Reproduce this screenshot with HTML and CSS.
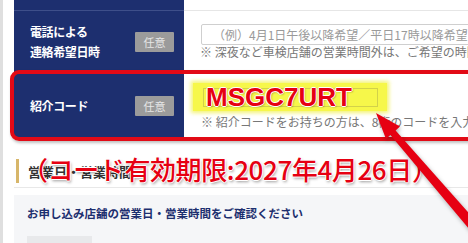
FILE: index.html
```html
<!DOCTYPE html>
<html lang="ja">
<head>
    <meta charset="UTF-8">
    <meta name="viewport" content="width=device-width, initial-scale=1.0">
    <title>紹介コード</title>
    <link rel="stylesheet" href="styles.css">
</head>
<body>
    <div class="page">
        <div class="form">
            <div class="row row-top">
                <div class="label"></div>
                <div class="field"></div>
            </div>
            <div class="row">
                <div class="label">
                    <span class="label-text">電話による<br>連絡希望日時</span>
                    <span class="badge">任意</span>
                </div>
                <div class="field">
                    <div class="input">（例）4月1日午後以降希望／平日17時以降希望</div>
                    <p class="note">※ 深夜など車検店舗の営業時間外は、ご希望の時間帯にご連絡できない場合がございます。</p>
                </div>
            </div>
            <div class="row row-code">
                <div class="label">
                    <span class="label-text">紹介コード</span>
                    <span class="badge">任意</span>
                </div>
                <div class="field">
                    <div class="highlight">
                        <div class="input input-code"></div>
                        <span class="code">MSGC7URT</span>
                    </div>
                    <p class="note note-code">※ 紹介コードをお持ちの方は、8桁のコードを入力してください。</p>
                </div>
            </div>
        </div>

        <section class="hours">
            <h2 class="sec-title">
                営業日・営業時間
                <span class="limit">（コード有効期限:2027年4月26日）</span>
            </h2>
            <div class="hours-box">
                <p class="hours-text">お申し込み店舗の営業日・営業時間をご確認ください</p>
                <div class="hours-tab"></div>
            </div>
        </section>

        <svg class="arrow" width="468" height="243" viewBox="0 0 468 243">
            <polygon points="373,113 397,126.5 392.6,130.4 488,238 480,245.5 387.4,135 383,139" fill="#e60012"/>
        </svg>
    </div>
</body>
</html>
```

FILE: styles.css
```css
body{
    margin: 0;
    padding: 0;
    background-color: #fff;
    overflow: hidden;
    font-family: "Noto Sans CJK JP", "Noto Sans", sans-serif;
}
.page{
    position: relative;
    width: 560px;
    height: 243px;
    border-left: 3px solid #dfdfdf;
    padding-left: 11px;
    overflow: hidden;
}

/* form table */
.row{
    display: flex;
    height: 62px;
    border-bottom: 1px solid #e6e6e6;
}
.row-top{
    height: 10px;
}
.row-code{
    position: relative;
    height: 63px;
    border-bottom: none;
}
.row-code::after{
    content: "";
    position: absolute;
    left: -4px;
    top: -4px;
    right: -40px;
    bottom: -4px;
    border: 4px solid #e20a16;
    border-radius: 9px;
    box-shadow: 1px 2px 3px rgba(0,0,0,0.25);
}
.label{
    box-sizing: border-box;
    width: 170px;
    flex: none;
    display: flex;
    align-items: center;
    justify-content: space-between;
    padding: 0 10px 0 16px;
    background-color: #1d2f6f;
    border-bottom: 1px solid #3e4f8a;
    margin-bottom: -1px;
}
.row-code .label{
    border-bottom: none;
    margin-bottom: 0;
}
.label-text{
    color: #fff;
    font-size: 12px;
    font-weight: bold;
    line-height: 20px;
    letter-spacing: -0.4px;
}
.badge{
    width: 39px;
    height: 20px;
    line-height: 20px;
    text-align: center;
    background-color: #9b9b9b;
    color: #e6e6e6;
    font-size: 11px;
    border-radius: 1px;
}
.field{
    flex: 1;
    padding: 13px 0 0 17px;
}
.input{
    width: 300px;
    height: 19px;
    border: 1px solid #cfcfcf;
    border-radius: 2px;
    padding-left: 11px;
    font-size: 12px;
    line-height: 19px;
    color: #9a9a9a;
    white-space: nowrap;
}
.note{
    margin: 0;
    font-size: 12px;
    line-height: 14px;
    color: #777;
    white-space: nowrap;
    margin-left: -1px;
}

/* highlighted code field */
.row-code .field{
    padding: 9px 0 0 9px;
}
.highlight{
    position: relative;
    width: 175px;
    padding: 5px 9px 4px 10px;
    background-color: #f6f74a;
    box-shadow: 0 0 4px 2px rgba(240,240,70,0.75);
}
.input-code{
    width: 173px;
    height: 17px;
    padding: 0;
    border-color: #d2d24a;
    border-radius: 0;
}
.code{
    position: absolute;
    left: 13px;
    top: 0;
    font-family: "Liberation Sans", Arial, sans-serif;
    font-size: 26px;
    font-weight: bold;
    line-height: 28px;
    color: #e60012;
    text-shadow: 1px 0 0 #fff, -1px 0 0 #fff, 0 1px 0 #fff, 0 -1px 0 #fff, 1px 1px 2px rgba(0,0,0,0.4);
}
.note-code{
    margin-top: 4px;
    margin-left: 8px;
}

/* business hours */
.sec-title{
    position: relative;
    display: flex;
    align-items: center;
    gap: 9px;
    height: 24px;
    margin: 22px 0 0;
    padding-bottom: 4px;
    border-bottom: 1px solid #e8e8e8;
    font-size: 13px;
    font-weight: bold;
    color: #333;
}
.sec-title::before{
    content: "";
    width: 3px;
    height: 24px;
    margin-left: 2px;
    background-color: #d7b66a;
}
.limit{
    position: absolute;
    left: 8px;
    top: -6px;
    font-size: 26px;
    font-weight: 500;
    line-height: 32px;
    letter-spacing: -0.4px;
    color: #e60012;
    white-space: nowrap;
    text-shadow: 1px 0 0 #fff, -1px 0 0 #fff, 0 1px 0 #fff, 0 -1px 0 #fff, 1px 2px 3px rgba(0,0,0,0.4);
}
.hours-box{
    margin-top: 7px;
    padding: 11px 13px 0;
    height: 60px;
    background-color: #f5f6f8;
}
.hours-text{
    margin: 0;
    font-size: 11.5px;
    line-height: 14px;
    font-weight: bold;
    color: #1d2f6f;
}
.hours-tab{
    width: 65px;
    height: 12px;
    margin-top: 16px;
    background-color: #e8e9eb;
}

.arrow{
    position: absolute;
    left: 0;
    top: 0;
    filter: drop-shadow(1px 2px 2px rgba(0,0,0,0.3));
}
```
